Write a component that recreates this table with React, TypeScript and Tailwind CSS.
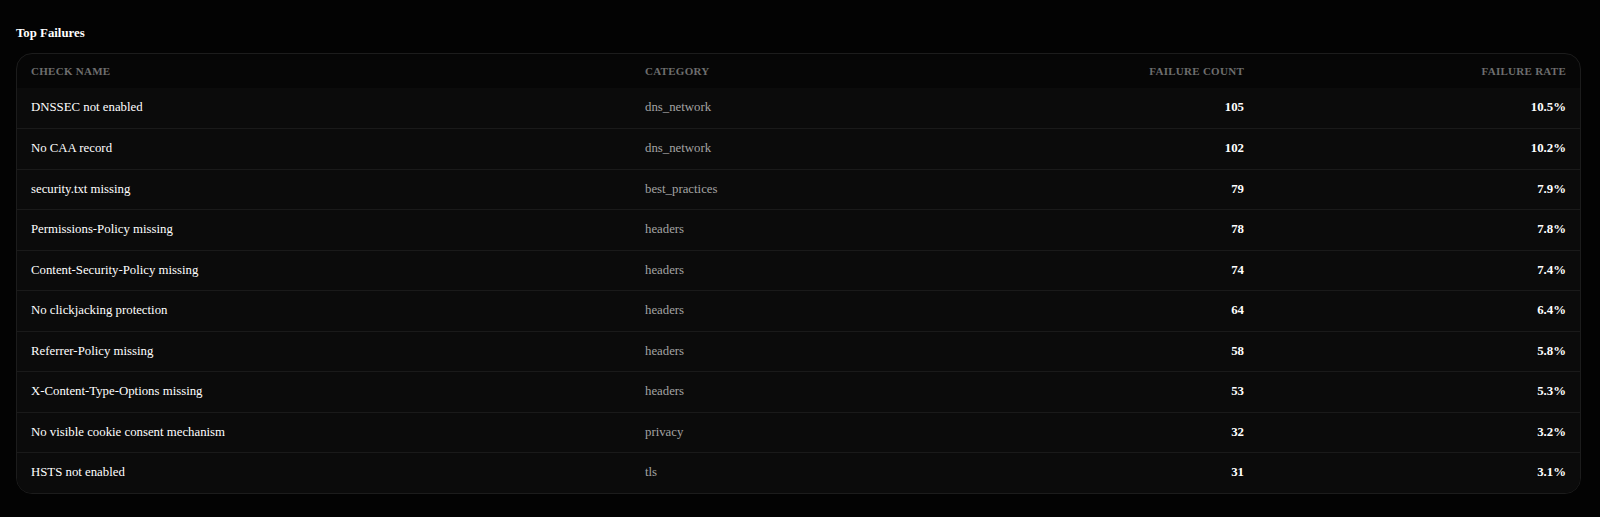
const rows = [
  { name: 'DNSSEC not enabled', category: 'dns_network', count: 105, rate: '10.5%' },
  { name: 'No CAA record', category: 'dns_network', count: 102, rate: '10.2%' },
  { name: 'security.txt missing', category: 'best_practices', count: 79, rate: '7.9%' },
  { name: 'Permissions-Policy missing', category: 'headers', count: 78, rate: '7.8%' },
  { name: 'Content-Security-Policy missing', category: 'headers', count: 74, rate: '7.4%' },
  { name: 'No clickjacking protection', category: 'headers', count: 64, rate: '6.4%' },
  { name: 'Referrer-Policy missing', category: 'headers', count: 58, rate: '5.8%' },
  { name: 'X-Content-Type-Options missing', category: 'headers', count: 53, rate: '5.3%' },
  { name: 'No visible cookie consent mechanism', category: 'privacy', count: 32, rate: '3.2%' },
  { name: 'HSTS not enabled', category: 'tls', count: 31, rate: '3.1%' },
]

export default function App() {
  return (
    <div className="min-h-[517px] bg-[#030303] px-4 pt-[25px] font-['Liberation_Serif',serif]">
      {/* Titulo */}
      <h2 className="mb-[12px] text-[12.8px] font-bold leading-4 text-white">Top Failures</h2>

      {/* Tabela */}
      <div className="w-[1565px] overflow-hidden rounded-2xl border border-[#1c1c1c] bg-[#060606]">
        <table className="w-full table-fixed border-collapse">
          <colgroup>
            <col className="w-[614px]" />
            <col className="w-[400px]" />
            <col className="w-[227px]" />
            <col />
          </colgroup>
          <thead>
            <tr className="h-[34px] text-[11px] font-semibold uppercase tracking-wide text-[#6e6e6e]">
              <th className="px-[14px] text-left font-semibold">Check Name</th>
              <th className="px-[14px] text-left font-semibold">Category</th>
              <th className="px-[14px] text-right font-semibold">Failure Count</th>
              <th className="px-[14px] text-right font-semibold">Failure Rate</th>
            </tr>
          </thead>
          <tbody className="bg-[#0b0b0b]">
            {rows.map((row, i) => (
              <tr key={row.name} className={`h-[40.5px] text-[12.8px] ${i > 0 ? 'border-t border-[#1a1a1a]' : ''}`}>
                <td className="px-[14px] text-white">{row.name}</td>
                <td className="px-[14px] text-[#a3a3a3]">{row.category}</td>
                <td className="px-[14px] text-right font-semibold text-white">{row.count}</td>
                <td className="px-[14px] text-right font-semibold text-white">{row.rate}</td>
              </tr>
            ))}
          </tbody>
        </table>
      </div>
    </div>
  )
}
